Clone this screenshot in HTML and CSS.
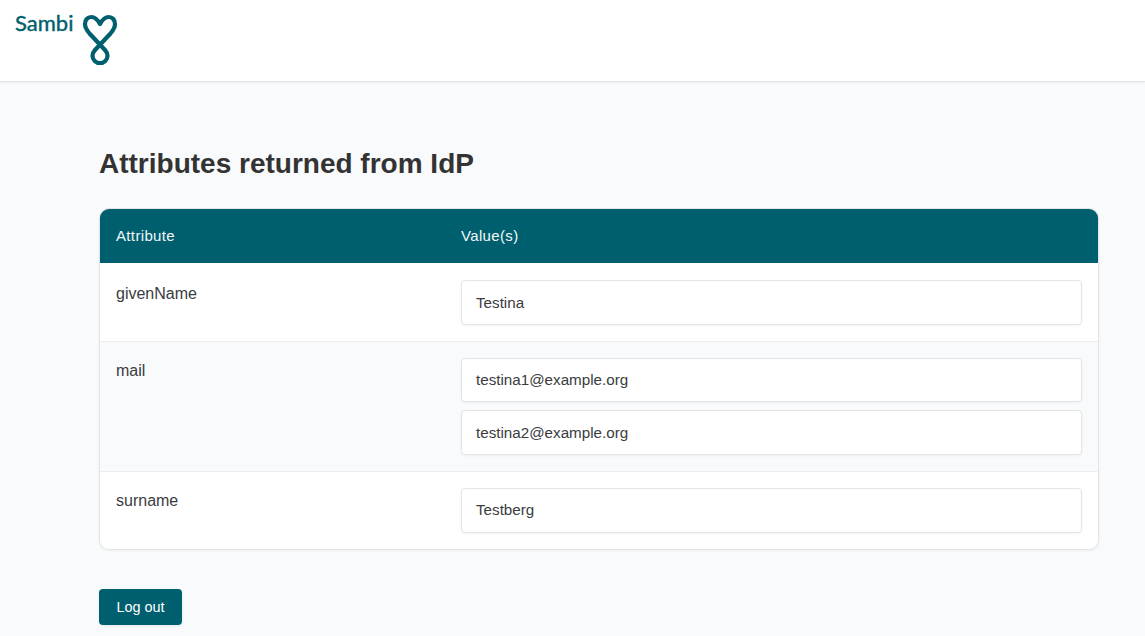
FILE: index.html
```html
<!DOCTYPE html>
<html lang="en">
<head>
<meta charset="utf-8">
<title>Attributes returned from IdP</title>
<link rel="stylesheet" href="styles.css">
</head>
<body>
<header class="topbar">
  <a class="logo" href="#">
    <span class="logo-text">Sambi</span>
    <svg class="logo-mark" width="36" height="52" viewBox="0 0 36 52" fill="none" aria-hidden="true">
      <path d="M18 10 C15.5 5.5 12.5 3 9.2 3 C5.5 3 3 6 3 10 C3 13.5 5 16.5 7.5 19.5 L23 36 C24.8 38 25.5 39.5 25.5 41.7 C25.5 45.8 22.2 49 18 49 C13.8 49 10.5 45.8 10.5 41.7 C10.5 39.5 11.2 38 13 36 L28.5 19.5 C31 16.5 33 13.5 33 10 C33 6 30.5 3 26.8 3 C23.5 3 20.5 5.5 18 10 Z" stroke="#005f6e" stroke-width="4.2" stroke-linejoin="round"/>
    </svg>
  </a>
</header>
<main class="content">
  <h1 class="title">Attributes returned from IdP</h1>
  <section class="table">
    <div class="row head">
      <div class="col-name">Attribute</div>
      <div class="col-value">Value(s)</div>
    </div>
    <div class="row first">
      <div class="col-name">givenName</div>
      <div class="col-value"><div class="value">Testina</div></div>
    </div>
    <div class="row alt">
      <div class="col-name">mail</div>
      <div class="col-value">
        <div class="value">testina1@example.org</div>
        <div class="value">testina2@example.org</div>
      </div>
    </div>
    <div class="row last">
      <div class="col-name">surname</div>
      <div class="col-value"><div class="value">Testberg</div></div>
    </div>
  </section>
  <button class="logout" type="button">Log out</button>
</main>
</body>
</html>
```
FILE: styles.css
```css
* { box-sizing: border-box; }
html, body { margin: 0; height: 100%; }
body {
  background: #f9fafb;
  color: #333333;
  font-family: "Liberation Sans", Arial, sans-serif;
  font-size: 16px;
  overflow: hidden;
}
.topbar {
  height: 82px;
  background: #fff;
  border-bottom: 1px solid #e2e4e6;
  box-shadow: 0 1px 3px rgba(0, 0, 0, 0.05);
  padding: 12px 15px 0;
}
.logo { display: flex; align-items: flex-start; gap: 9px; text-decoration: none; }
.logo-text {
  width: 58px;
  margin-top: -1px;
  font-family: Lato, sans-serif;
  font-size: 22px;
  line-height: 24px;
  color: #005f6e;
  font-weight: 400;
  -webkit-text-stroke: 0.4px #005f6e;
}
.logo-mark { margin-top: 2px; }
.content { padding: 0 46px 0 99px; }
.title {
  margin: 66px 0 28.2px;
  font-size: 28px;
  line-height: 32px;
  font-weight: 700;
}
.table {
  background: #fff;
  border: 1px solid #e2e4e6;
  border-radius: 10px;
  overflow: hidden;
  box-shadow: 0 1px 3px rgba(0, 0, 0, 0.05);
  color: #3a3c40;
}
.row {
  display: grid;
  grid-template-columns: 345px 1fr;
  padding: 16px;
  border-bottom: 1px solid #eceef0;
}
.row.first { padding-top: 16.9px; padding-bottom: 15.5px; }
.row.last { border-bottom: 0; }
.row.alt { background: #f9fafb; }
.row.head {
  background: #005f6e;
  color: #f2f7f8;
  height: 54.2px;
  padding: 0 16px 2px;
  align-items: center;
  font-size: 15px;
  letter-spacing: 0.35px;
  border-bottom: 0;
}
.col-name { padding-top: 3.2px; line-height: 19px; }
.first .col-name { padding-top: 3.6px; }
.head .col-name { padding-top: 0; }
.col-value { display: flex; flex-direction: column; gap: 8px; }
.value {
  background: #fff;
  border: 1px solid #e2e4e6;
  border-radius: 4px;
  padding: 10.3px 14px 9.7px;
  font-size: 15.2px;
  line-height: 22.8px;
  box-shadow: 0 1px 3px rgba(0, 0, 0, 0.05);
}
.logout {
  display: block;
  margin-top: 39px;
  width: 83px;
  height: 36px;
  border: 0;
  border-radius: 4px;
  background: #005f6e;
  color: #fff;
  font-family: inherit;
  font-size: 14.4px;
  box-shadow: 0 1px 3px rgba(0, 0, 0, 0.08);
}
```
